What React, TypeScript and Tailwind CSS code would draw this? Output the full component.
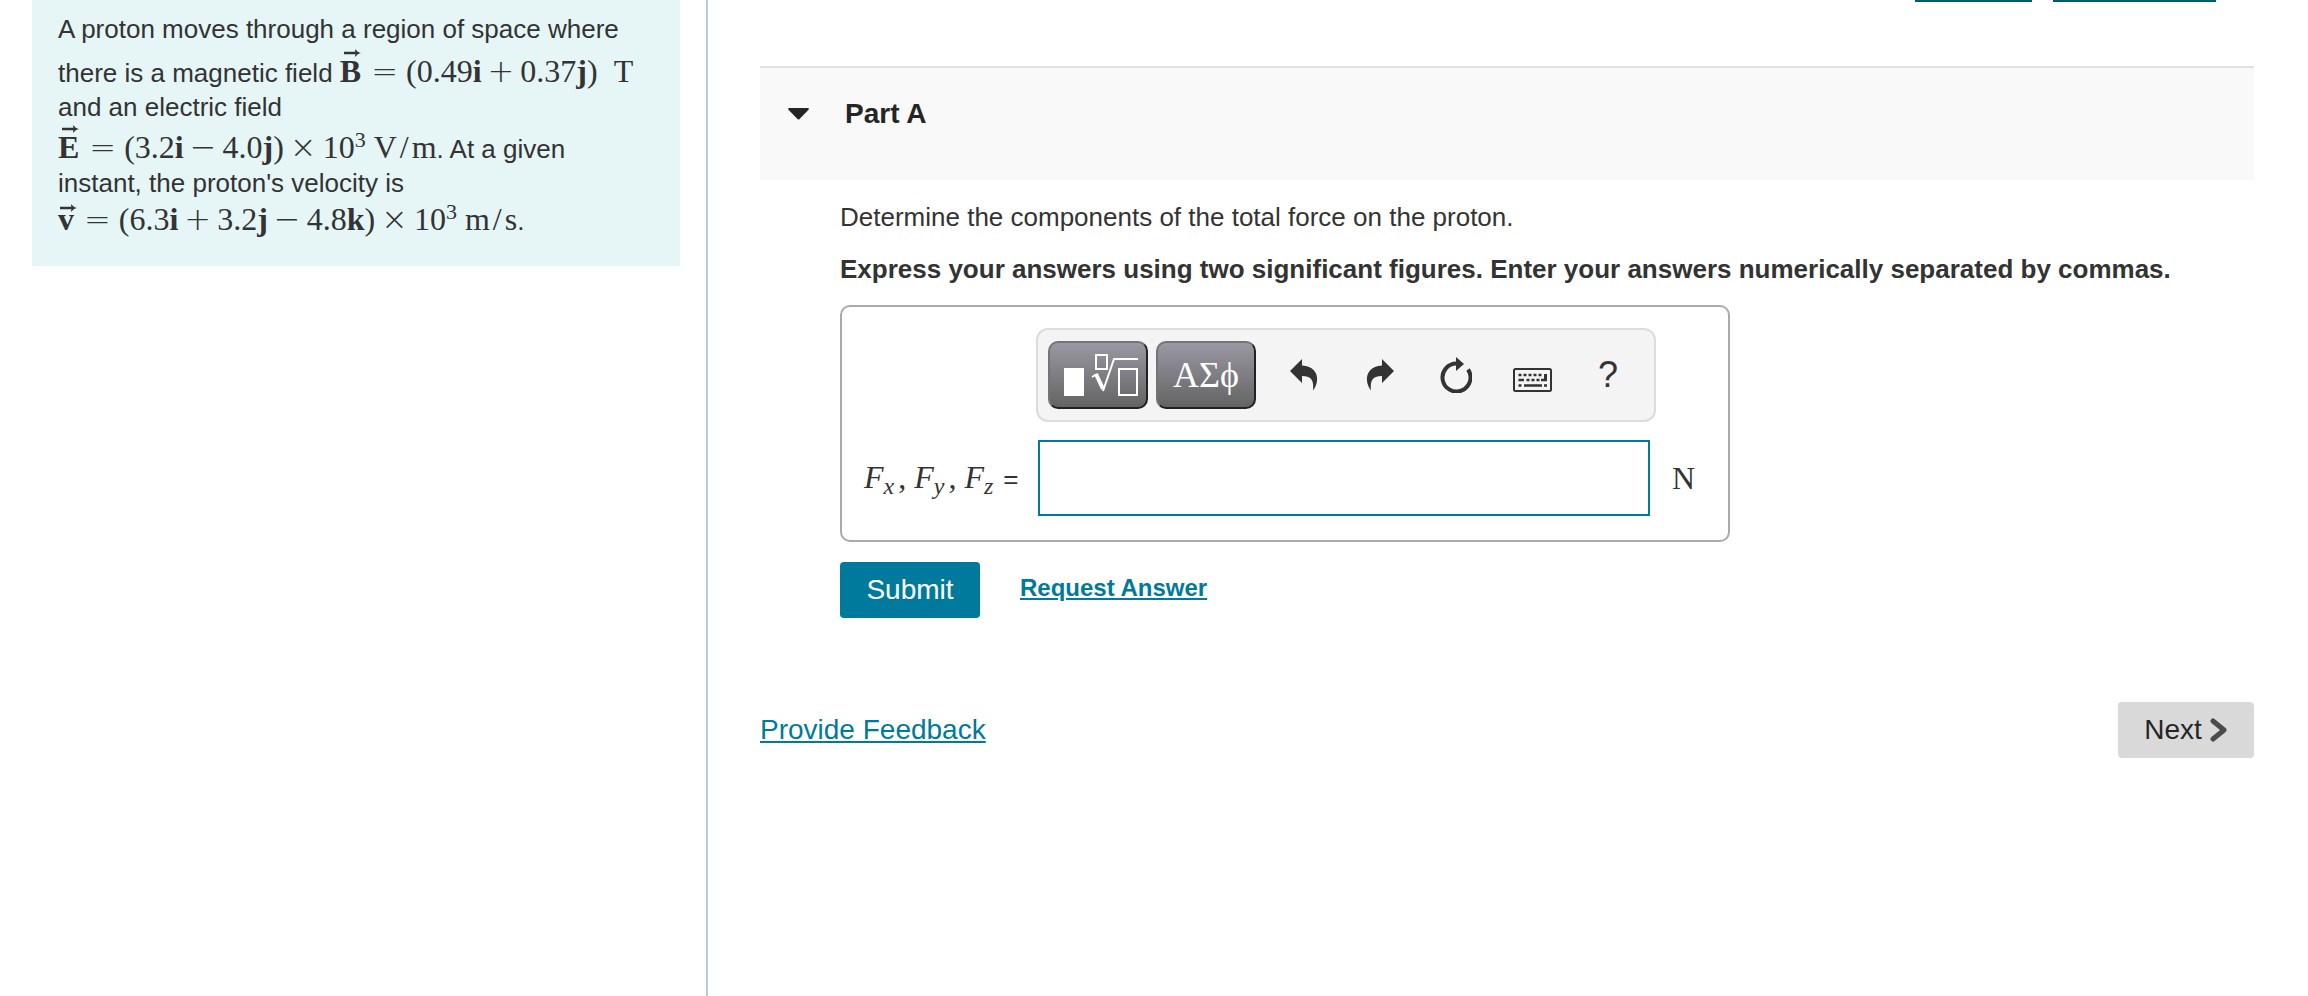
import type { ReactNode } from "react";

interface ToolButtonProps {
	label: string;
	children: ReactNode;
}

function Tex({ children }: { children: ReactNode }) {
	return (
		<span className="font-['Liberation_Serif',serif] text-[32px] leading-7">
			{children}
		</span>
	);
}

function Op({ children }: { children: ReactNode }) {
	return (
		<span className="font-['DejaVu_Sans',sans-serif] font-extralight text-[32px] leading-6">
			{children}
		</span>
	);
}

function Vector({ name, low = false }: { name: string; low?: boolean }) {
	return (
		<b className="relative mr-0.5">
			{name}
			<svg
				className={`absolute ${low ? "top-[3px] left-0.5" : "-top-1 left-1"}`}
				width="17"
				height="8"
				viewBox="0 0 18 8"
				aria-hidden="true"
			>
				<path
					d="M0 2.800h12.500C11.500 2 11.500 1 12 0c1.500 2 3.500 3.500 6 4-2.500 .5-4.500 2-6 4-.5-1-.5-2 .5-2.800H0z"
					fill="currentColor"
				/>
			</svg>
		</b>
	);
}

function ToolButton({ label, children }: ToolButtonProps) {
	return (
		<button
			type="button"
			aria-label={label}
			className="flex h-[68px] w-[76px] items-center justify-center text-[#333]"
		>
			{children}
		</button>
	);
}

function PaletteButton({ label, children }: ToolButtonProps) {
	return (
		<button
			type="button"
			aria-label={label}
			className="flex h-[68px] w-[100px] items-center justify-center rounded-[10px] border-2 border-t-[#747474] border-r-[#222] border-b-[#222] border-l-[#747474] bg-linear-to-b from-[#9a98a3] to-[#646464] text-white"
		>
			{children}
		</button>
	);
}

function Problem() {
	return (
		<section className="mr-[26px] ml-8 bg-[#e6f6f7] pt-3 pb-7 pl-[26px] text-[26px] leading-[34px] whitespace-nowrap text-[#333]">
			<p>A proton moves through a region of space where</p>
			<p className="pt-2.5">
				there is a magnetic field{" "}
				<Tex>
					<Vector name="B" />
					<span className="mx-2">
						<Op>=</Op>
					</span>
					(0.49<b>i</b>
					<span className="mx-1.5">
						<Op>+</Op>
					</span>
					0.37<b>j</b>)<span className="ml-4">T</span>
				</Tex>
			</p>
			<p>and an electric field</p>
			<p className="pt-2">
				<Tex>
					<Vector name="E" />
					<span className="mx-2">
						<Op>=</Op>
					</span>
					(3.2<b>i</b>
					<span className="mx-1.5">
						<Op>−</Op>
					</span>
					4.0<b>j</b>)
					<span className="mx-1.5">
						<Op>×</Op>
					</span>
					10<sup className="text-[22px]">3</sup>
					<span className="ml-2">
						V<span className="mx-[3px]">/</span>m
					</span>
				</Tex>
				. At a given
			</p>
			<p>instant, the proton's velocity is</p>
			<p className="pt-1">
				<Tex>
					<Vector name="v" low />
					<span className="mx-2">
						<Op>=</Op>
					</span>
					(6.3<b>i</b>
					<span className="mx-1.5">
						<Op>+</Op>
					</span>
					3.2<b>j</b>
					<span className="mx-1.5">
						<Op>−</Op>
					</span>
					4.8<b>k</b>)
					<span className="mx-1.5">
						<Op>×</Op>
					</span>
					10<sup className="text-[22px]">3</sup>
					<span className="ml-2">
						m<span className="mx-[3px]">/</span>s
					</span>
				</Tex>
				.
			</p>
		</section>
	);
}

function Toolbar() {
	return (
		<div
			role="toolbar"
			aria-label="Equation editor"
			className="flex items-center rounded-xl border-2 border-[#dcdcdc] bg-[#f4f4f4] py-[11px] pl-2.5"
		>
			<div className="mr-2.5 flex gap-2">
				<PaletteButton label="Templates">
					<svg className="ml-1" width="76" height="44" viewBox="0 0 76 44" fill="none" stroke="white">
						<path d="M2 15h20v28H2z" fill="white" stroke="none" />
						<path d="M34 2h11v14H34z" strokeWidth="2" />
						<path d="M57 16h18v26H57z" strokeWidth="2" />
						<path d="M30 24l5-3" strokeWidth="2" />
						<path d="M34 21l7 15" strokeWidth="4" />
						<path d="M41 38L52 6h24" strokeWidth="2" />
					</svg>
				</PaletteButton>
				<PaletteButton label="Symbols">
					<span className="font-['Liberation_Serif',serif] text-[36px] leading-10">
						ΑΣϕ
					</span>
				</PaletteButton>
			</div>
			<ToolButton label="Undo">
				<svg width="28" height="32" viewBox="0 0 28 32" fill="currentColor">
					<path d="M0 12L12 0v6.500C23 7 28 14 27 22c-.5 4-2 7-4 9.500C24 22 22 17 12 17v7z" />
				</svg>
			</ToolButton>
			<ToolButton label="Redo">
				<svg width="28" height="32" viewBox="0 0 28 32" fill="currentColor">
					<path d="M28 12L16 0v6.500C5 7 0 14 1 22c.5 4 2 7 4 9.500C4 22 6 17 16 17v7z" />
				</svg>
			</ToolButton>
			<ToolButton label="Reset">
				<svg width="32" height="36" viewBox="0 0 32 36" fill="none">
					<path d="M17 6.500A14 14 0 1 0 28 12.500" stroke="currentColor" strokeWidth="4" />
					<path d="M16 0l8 7-8 7z" fill="currentColor" />
				</svg>
			</ToolButton>
			<ToolButton label="Keyboard">
				<svg className="mt-2.5" width="39" height="24" viewBox="0 0 39 24" fill="none" stroke="currentColor">
					<rect x="1" y="1" width="37" height="22" rx="1.500" strokeWidth="2" />
					<path d="M5.500 7h24" strokeWidth="2.500" strokeDasharray="3 2" />
					<path
						d="M5.500 12h5.500M13.500 12h3M18.500 12h3M23.500 12h3M28 12h6M5.500 17.500h3M11 17.500h18M31 17.500h3"
						strokeWidth="2.500"
					/>
					<path d="M32.500 6v7" strokeWidth="3" />
				</svg>
			</ToolButton>
			<ToolButton label="Help">
				<span className="text-[36px] leading-10">?</span>
			</ToolButton>
		</div>
	);
}

function AnswerForm() {
	return (
		<form className="mt-[19px]">
			<div className="grid w-[890px] max-w-full grid-cols-[194px_1fr_72px] items-center gap-y-[18px] rounded-[10px] border-2 border-[#aaa] pt-[21px] pb-6 text-[#333]">
				<div className="col-start-2">
					<Toolbar />
				</div>
				<label
					htmlFor="force"
					className="col-start-1 flex items-baseline pl-[22px] font-['Liberation_Serif',serif] text-[32px]"
				>
					<i>
						F<sub className="text-[24px]">x</sub>
					</i>
					<span className="mr-2 ml-1">,</span>
					<i>
						F<sub className="text-[24px]">y</sub>
					</i>
					<span className="mr-2 ml-1">,</span>
					<i>
						F<sub className="text-[24px]">z</sub>
					</i>
					<span className="ml-2.5 font-['Liberation_Sans',sans-serif] text-[26px]">
						=
					</span>
				</label>
				<input
					id="force"
					type="text"
					className="mr-1.5 ml-0.5 h-[76px] min-w-0 border-2 border-[#007a9c] bg-white px-3 text-[28px] outline-none"
				/>
				<span className="pl-4 font-['Liberation_Serif',serif] text-[32px]">N</span>
			</div>
			<div className="mt-5 flex items-center gap-10">
				<button
					type="button"
					className="h-14 w-[140px] rounded-[4px] bg-[#007a9c] text-[28px] text-white"
				>
					Submit
				</button>
				<a
					href="#answer"
					className="pb-1 text-[24px] font-bold text-[#007a9c] underline decoration-2 underline-offset-2"
				>
					Request Answer
				</a>
			</div>
		</form>
	);
}

export default function App() {
	return (
		<div className="flex min-h-screen bg-white font-['Liberation_Sans',Arial,sans-serif] text-[#333]">
			<aside className="w-[708px] shrink-0 border-r-2 border-[#b9cbde]">
				<Problem />
			</aside>
			<main className="min-w-0 flex-1 pr-[54px] pl-[52px]">
				{/* lower edge of the resource links above the part */}
				<div className="flex h-[66px] justify-end gap-[21px] pr-[38px]" aria-hidden="true">
					<span className="h-0.5 w-[117px] bg-[#005a70]" />
					<span className="h-0.5 w-[163px] bg-[#005a70]" />
				</div>
				<header className="flex h-[114px] items-start border-t-2 border-[#e0e0e0] bg-[#f9f9f9] pt-[30px] pl-7 text-[#252525]">
					<button type="button" className="flex items-center gap-9 text-[28px] leading-8 font-bold">
						<svg width="21" height="12" viewBox="0 0 21 12" fill="currentColor" aria-hidden="true">
							<path d="M1 0h19q1 0 .8 1.500L11.500 11q-1 1-2 0L.2 1.500Q0 0 1 0z" />
						</svg>
						Part A
					</button>
				</header>
				<div className="pt-5 pl-20 text-[26px] leading-[34px]">
					<p>Determine the components of the total force on the proton.</p>
					<p className="mt-[18px] font-bold">
						Express your answers using two significant figures. Enter your answers
						numerically separated by commas.
					</p>
					<AnswerForm />
				</div>
				<footer className="mt-[84px] flex items-center justify-between text-[28px]">
					<a
						href="#feedback"
						className="text-[#007a9c] underline decoration-2 underline-offset-2"
					>
						Provide Feedback
					</a>
					<button
						type="button"
						className="flex h-14 w-[136px] items-center justify-center gap-2 rounded-[4px] bg-[#d9d9d9] text-[#252525]"
					>
						Next
						<svg width="18" height="24" viewBox="0 0 18 24" fill="none" aria-hidden="true">
							<path d="M3 3l11 9-11 9" stroke="#4a4a4a" strokeWidth="5" strokeLinecap="round" strokeLinejoin="round" />
						</svg>
					</button>
				</footer>
			</main>
		</div>
	);
}
